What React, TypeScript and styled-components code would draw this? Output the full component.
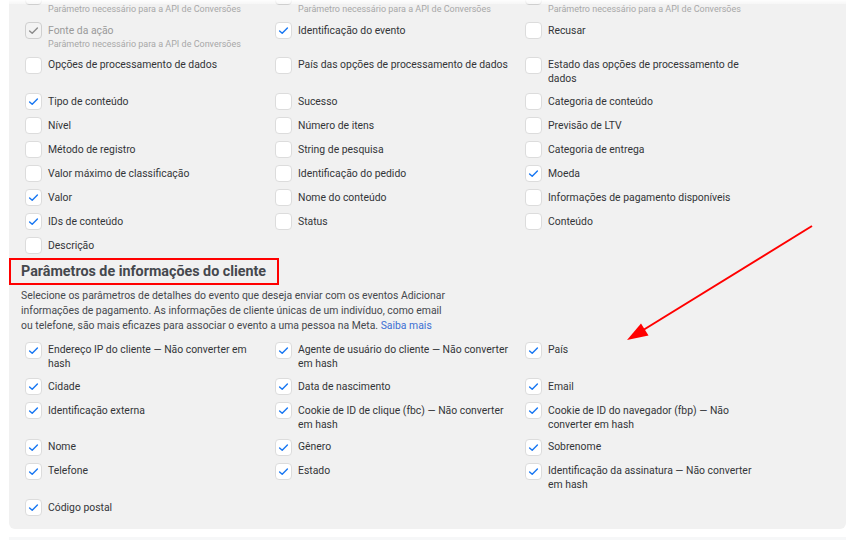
import * as React from 'react';
import styled, { createGlobalStyle } from 'styled-components';

const GlobalStyle = createGlobalStyle`
	html, body {
		margin: 0;
		padding: 0;
		background: #ffffff;
		overflow: hidden;
	}
	body {
		font-family: Roboto, "Liberation Sans", Arial, sans-serif;
		-webkit-font-smoothing: antialiased;
	}
`;

interface IParam {
	label?: string;
	checked?: boolean;
	disabled?: boolean;
	hint?: string;
}

const REQUIRED_HINT = 'Parâmetro necessário para a API de Conversões';

// the first row is scrolled out of view, only its hints show
const eventParams: IParam[] = [
	{ checked: true, disabled: true, hint: REQUIRED_HINT },
	{ checked: true, disabled: true, hint: REQUIRED_HINT },
	{ checked: true, disabled: true, hint: REQUIRED_HINT },
	{ label: 'Fonte da ação', checked: true, disabled: true, hint: REQUIRED_HINT },
	{ label: 'Identificação do evento', checked: true },
	{ label: 'Recusar' },
	{ label: 'Opções de processamento de dados' },
	{ label: 'País das opções de processamento de dados' },
	{ label: 'Estado das opções de processamento de dados' },
	{ label: 'Tipo de conteúdo', checked: true },
	{ label: 'Sucesso' },
	{ label: 'Categoria de conteúdo' },
	{ label: 'Nível' },
	{ label: 'Número de itens' },
	{ label: 'Previsão de LTV' },
	{ label: 'Método de registro' },
	{ label: 'String de pesquisa' },
	{ label: 'Categoria de entrega' },
	{ label: 'Valor máximo de classificação' },
	{ label: 'Identificação do pedido' },
	{ label: 'Moeda', checked: true },
	{ label: 'Valor', checked: true },
	{ label: 'Nome do conteúdo' },
	{ label: 'Informações de pagamento disponíveis' },
	{ label: 'IDs de conteúdo', checked: true },
	{ label: 'Status' },
	{ label: 'Conteúdo' },
	{ label: 'Descrição' },
];

const customerParams: IParam[] = [
	{ label: 'Endereço IP do cliente — Não converter em hash', checked: true },
	{ label: 'Agente de usuário do cliente — Não converter em hash', checked: true },
	{ label: 'País', checked: true },
	{ label: 'Cidade', checked: true },
	{ label: 'Data de nascimento', checked: true },
	{ label: 'Email', checked: true },
	{ label: 'Identificação externa', checked: true },
	{ label: 'Cookie de ID de clique (fbc) — Não converter em hash', checked: true },
	{ label: 'Cookie de ID do navegador (fbp) — Não converter em hash', checked: true },
	{ label: 'Nome', checked: true },
	{ label: 'Gênero', checked: true },
	{ label: 'Sobrenome', checked: true },
	{ label: 'Telefone', checked: true },
	{ label: 'Estado', checked: true },
	{ label: 'Identificação da assinatura — Não converter em hash', checked: true },
	{ label: 'Código postal', checked: true },
];

const Page = styled.div`
	position: relative;
	width: 850px;
	height: 540px;
	overflow: hidden;
	padding: 0 4px 0 9px;
	box-sizing: border-box;
`;

const TopFade = styled.div`
	position: absolute;
	left: 0;
	right: 0;
	top: 0;
	height: 4px;
	background: linear-gradient(rgba(255, 255, 255, 0.95), rgba(255, 255, 255, 0.4));
	z-index: 2;
`;

const Panel = styled.div`
	margin-top: -22.5px;
	padding: 10px 0 13px;
	background: #f1f1f1;
	border-radius: 0 0 6px 6px;
`;

const ParamGrid = styled.div`
	display: grid;
	grid-template-columns: repeat(3, 250px);
	row-gap: 7px;
	padding-left: 16px;
	align-items: start;
`;

const Item = styled.label`
	display: flex;
	align-items: flex-start;
	gap: 6px;
`;

const Box = styled.span<{ $disabled?: boolean }>`
	flex: none;
	width: 17px;
	height: 17px;
	box-sizing: border-box;
	border: 1px solid ${p => (p.$disabled ? '#cfcfcf' : '#dcdcdc')};
	border-radius: 4px;
	background: ${p => (p.$disabled ? '#f3f3f3' : '#ffffff')};
	display: flex;
	align-items: center;
	justify-content: center;
	svg {
		display: block;
	}
`;

const Texts = styled.span`
	display: flex;
	flex-direction: column;
	max-width: 216px;
	padding-top: 1.5px;
`;

const Label = styled.span<{ $disabled?: boolean }>`
	min-height: 14px;
	font-size: 10.4px;
	line-height: 14px;
	color: ${p => (p.$disabled ? '#9a9a9a' : '#333538')};
`;

const Hint = styled.span`
	font-size: 9px;
	line-height: 12px;
	color: #a8a8a8;
`;

const SectionTitle = styled.h3`
	margin: 3.5px 0 0;
	width: 270px;
	height: 27px;
	box-sizing: border-box;
	border: 2px solid #ff0000;
	padding-left: 10px;
	display: flex;
	align-items: center;
	font-size: 14.3px;
	font-weight: 700;
	color: #45484d;
`;

const Intro = styled.p`
	margin: 3px 0 9px;
	padding-left: 12px;
	width: 432px;
	font-size: 10.4px;
	line-height: 15px;
	color: #45484d;
`;

const Link = styled.a`
	color: #3b6fd3;
	text-decoration: none;
`;

const BottomBar = styled.div`
	margin-top: 8px;
	height: 3px;
	background: #f6f7f8;
`;

const Annotation = styled.svg`
	position: absolute;
	left: 0;
	top: 0;
	pointer-events: none;
	z-index: 3;
`;

const CheckMark = ({ disabled }: { disabled?: boolean }) => (
	<svg width="13" height="13" viewBox="0 0 13 13">
		<path
			d="M2.6 6.9 L5.2 9.3 L10.4 4"
			fill="none"
			stroke={disabled ? '#8c8c8c' : '#1877f2'}
			strokeWidth="1.4"
			strokeLinecap="round"
			strokeLinejoin="round"
		/>
	</svg>
);

const Param = ({ p }: { p: IParam }) => (
	<Item>
		<Box $disabled={p.disabled}>{p.checked && <CheckMark disabled={p.disabled} />}</Box>
		<Texts>
			<Label $disabled={p.disabled}>{p.label}</Label>
			{p.hint && <Hint>{p.hint}</Hint>}
		</Texts>
	</Item>
);

export default function App() {
	return (
		<Page>
			<GlobalStyle />
			<TopFade />
			<Panel>
				<ParamGrid>
					{eventParams.map((p, i) => (
						<Param key={i} p={p} />
					))}
				</ParamGrid>
				<SectionTitle>Parâmetros de informações do cliente</SectionTitle>
				<Intro>
					Selecione os parâmetros de detalhes do evento que deseja enviar com os eventos Adicionar
					informações de pagamento. As informações de cliente únicas de um indivíduo, como email
					ou telefone, são mais eficazes para associar o evento a uma pessoa na Meta.{' '}
					<Link href="#">Saiba mais</Link>
				</Intro>
				<ParamGrid>
					{customerParams.map((p, i) => (
						<Param key={i} p={p} />
					))}
				</ParamGrid>
			</Panel>
			<BottomBar />
			<Annotation width="850" height="540" viewBox="0 0 850 540">
				<line x1="812" y1="226" x2="640" y2="332" stroke="#ff0000" strokeWidth="2" />
				<polygon points="627,340 641,323.5 648.5,335.5" fill="#ff0000" />
			</Annotation>
		</Page>
	);
}
